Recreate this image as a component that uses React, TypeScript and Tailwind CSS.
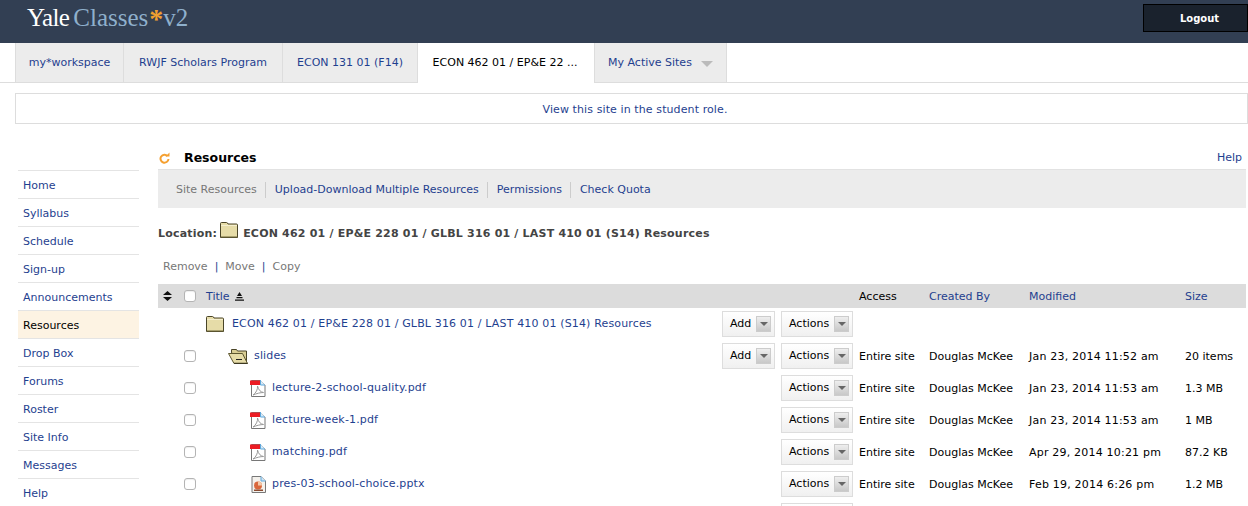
const sideItems = ["Home", "Syllabus", "Schedule", "Sign-up", "Announcements", "Resources", "Drop Box", "Forums", "Roster", "Site Info", "Messages", "Help"];

function Checkbox() {
  return <span className="block h-3 w-3 rounded-[3px] border border-[#b4b4b4] bg-white shadow-[inset_0_1px_1px_#eee]" />;
}

function DropButton({ label, width }: { label: string; width: string }) {
  return (
    <div className={`flex h-[26px] ${width} items-center justify-between border border-[#ddd] bg-gradient-to-b from-white to-[#f0f0f0] pl-[7px] pr-[3px] text-black`}>
      <span>{label}</span>
      <span className="flex h-4 w-[15px] items-center justify-center border border-[#ccc] bg-gradient-to-b from-[#eee] to-[#c8c8c8]">
        <span className="h-0 w-0 border-x-[4px] border-t-[4px] border-x-transparent border-t-[#666]" />
      </span>
    </div>
  );
}

function ClosedFolder() {
  return (
    <svg width="18" height="16" viewBox="0 0 18 16" className="shrink-0">
      <path d="M.5 3V1.500q0-1 1-1h5q1 0 1.500 1.500H16.500q1 0 1 1V15.500H.5z" fill="#e6dca8" stroke="#4a4528" />
      <path d="M1 14.500H17.500V15.500H1z" fill="#6b6436" />
      <path d="M1 3.500H17" stroke="#f5efcf" />
    </svg>
  );
}

function OpenFolder() {
  return (
    <svg width="20" height="16" viewBox="0 0 20 16" className="shrink-0">
      <path d="M3.500 4V1.500h5l1 1.500h9v12H6z" fill="#d8cd94" stroke="#4a4528" />
      <path d="M.5 5.500h14l5 10H6z" fill="#e6dca8" stroke="#5d5730" />
      <path d="M8 11.500h6" stroke="#222" />
      <path d="M6 15.500h13.500" stroke="#3c3820" strokeWidth="1.500" />
    </svg>
  );
}

function PdfIcon() {
  return (
    <svg width="16" height="18" viewBox="0 0 16 18" className="shrink-0">
      <path d="M1.500 1.500H10.500L15 6V17.500H1.500z" fill="#fff" stroke="#777" />
      <path d="M10.500 1v5H15" fill="#d6ebfa" stroke="#5fa8dc" />
      <rect x="0" y="1.500" width="10" height="4.500" fill="#ec1c24" />
      <path d="M3 16c3-2 5-6 4.500-9 1 4 3 6 6 6.500-3 0-7 1-10.500 2.500z" fill="none" stroke="#999" />
    </svg>
  );
}

function PptIcon() {
  return (
    <svg width="15" height="17" viewBox="0 0 15 17" className="shrink-0">
      <path d="M1 .5H10L14.500 5V16.500H1z" fill="#f4f1ec" stroke="#777" />
      <path d="M10 .5V5h4.500" fill="#cfe6f7" stroke="#5fa8dc" />
      <circle cx="7" cy="9.500" r="4" fill="#d9673c" />
      <path d="M7 9.500V5.500a4 4 0 0 1 4 4z" fill="#f3c9a8" />
      <rect x="3" y="13.500" width="9" height="1.500" fill="#8a4a30" />
    </svg>
  );
}

function Row({ check = true, indent, icon, name, add = false, action = "Actions", access = "", by = "", modified = "", size = "" }: {
  check?: boolean; indent: string; icon?: React.ReactNode; name?: string; add?: boolean; action?: string; access?: string; by?: string; modified?: string; size?: string;
}) {
  return (
    <div className="flex h-8 shrink-0 items-center">
      <div className="w-[26px] shrink-0" />
      <div className="w-3 shrink-0">{check && <Checkbox />}</div>
      <div className={`flex w-[526px] shrink-0 items-center ${indent}`}>
        {icon}
        <span className="whitespace-nowrap tracking-[0.15px] text-[#1f3f8f]">{name}</span>
      </div>
      <div className="w-[59px] shrink-0">{add && <DropButton label="Add" width="w-[53px]" />}</div>
      <div className="w-[78px] shrink-0"><DropButton label={action} width="w-[72px]" /></div>
      <div className="w-[70px] shrink-0 pt-[2px] text-black">{access}</div>
      <div className="w-[100px] shrink-0 pt-[2px] text-black">{by}</div>
      <div className="w-[156px] shrink-0 pt-[2px] tracking-[0.2px] text-black">{modified}</div>
      <div className="whitespace-nowrap pt-[2px] text-black">{size}</div>
    </div>
  );
}

export default function App() {
  return (
    <div className="h-[506px] w-[1248px] overflow-hidden bg-white font-['DejaVu_Sans',sans-serif] text-[11px] text-[#1f3f8f]">
      {/* Top banner */}
      <header className="flex h-[43px] justify-between bg-[#323f53]">
        <div className="flex items-baseline pl-[27px] pt-[3px] font-['Liberation_Serif',serif] text-[25px] leading-[30px]">
          <span className="tracking-[-0.6px] text-white">Yale</span>
          <span className="ml-[4px] text-[#8fb0cc]">Classes</span>
          <span className="ml-[1px] translate-y-[2px] text-[28px] font-bold leading-[20px] text-[#f0a030]">*</span>
          <span className="text-[#8fb0cc]">v2</span>
        </div>
        <button className="mt-1 h-7 w-[105px] border border-black bg-[#1a222d] pl-2 pt-[1px] text-[10px] font-bold text-white">Logout</button>
      </header>

      {/* Site tabs */}
      <nav className="flex h-10 border-b border-[#ddd] pl-[15px]">
        <div className="flex h-[39px] w-[109px] items-center justify-center border-x border-[#ddd] bg-[#ececec] pt-[2px]">my*workspace</div>
        <div className="flex h-[39px] w-[159px] items-center justify-center border-r border-[#ddd] bg-[#ececec] pt-[2px]">RWJF Scholars Program</div>
        <div className="flex h-[39px] w-[135px] items-center justify-center border-r border-[#ddd] bg-[#ececec] pt-[2px]">ECON 131 01 (F14)</div>
        <div className="flex h-10 w-[176px] items-center justify-center bg-white pr-[2px] text-black">ECON 462 01 / EP&amp;E 22 ...</div>
        <div className="flex h-[39px] w-[133px] items-center gap-[9px] border-x border-[#ddd] bg-[#ececec] pl-[13px] pt-[2px]">
          My Active Sites
          <span className="h-0 w-0 border-x-[6px] border-t-[6px] border-x-transparent border-t-[#bbb]" />
        </div>
      </nav>

      {/* Role notice */}
      <div className="ml-[15px] mt-[10px] flex h-[31px] items-center justify-center border border-[#ddd] pl-[7px] pt-[3px] tracking-[0.1px]">View this site in the student role.</div>

      <div className="mt-[24px] flex">
        {/* Tool menu */}
        <aside className="ml-[18px] mt-[22px] w-[121px] shrink-0">
          {sideItems.map((item) => (
            <div key={item} className={`flex h-7 items-center border-t border-[#e4e4e4] pl-[5px] pt-[4px] ${item === "Resources" ? "bg-[#fdf3e3] text-black" : ""}`}>
              {item}
            </div>
          ))}
        </aside>

        <main className="ml-[19px] w-[1088px] shrink-0">
          <div className="flex h-[21px] items-center justify-between">
            <div className="flex items-center">
              <svg width="11" height="12" viewBox="0 0 11 12" className="ml-[1px] -mt-[2px]">
                <path d="M8.500 4A4 4 0 1 0 9.500 7" fill="none" stroke="#f5a030" strokeWidth="2" />
                <path d="M6.500 4.500H10.500V.5z" fill="#f5a030" />
              </svg>
              <h1 className="ml-[14px] -mt-[1px] text-[12.5px] font-bold text-black">Resources</h1>
            </div>
            <span className="mr-1">Help</span>
          </div>

          {/* Tool sub-navigation */}
          <div className="flex h-[39px] items-center border-t border-[#e2e2e2] bg-[#ececec] pl-[18px] pt-[2px]">
            <span className="border-r border-[#ccc] pr-[8px] text-[#777]">Site Resources</span>
            <span className="border-r border-[#ccc] pl-[9px] pr-[8px]">Upload-Download Multiple Resources</span>
            <span className="border-r border-[#ccc] pl-[9px] pr-[8px]">Permissions</span>
            <span className="pl-[9px]">Check Quota</span>
          </div>

          <div className="mt-[13px] flex h-[24px] items-center whitespace-nowrap pt-[2px] font-bold tracking-[0.2px] text-[#444]">
            <span className="mr-[3px]">Location:</span>
            <span className="-mt-2"><ClosedFolder /></span>
            <span className="ml-[5px]">ECON 462 01 / EP&amp;E 228 01 / GLBL 316 01 / LAST 410 01 (S14) Resources</span>
          </div>

          <div className="mt-[10px] flex h-[24px] items-center pl-[5px] text-[#777]">
            <span>Remove</span>
            <span className="mx-[7px] text-[#1f3f8f]">|</span>
            <span>Move</span>
            <span className="mx-[7px] text-[#1f3f8f]">|</span>
            <span>Copy</span>
          </div>

          {/* Resource list */}
          <div className="mt-[5px] flex h-6 items-center bg-[#dcdcdc]">
            <svg width="9" height="10" viewBox="0 0 9 10" className="ml-[5px] mr-[12px] shrink-0">
              <path d="M4.500 0L9 4H0zM0 6H9L4.500 10z" fill="#111" />
            </svg>
            <div className="w-3 shrink-0"><Checkbox /></div>
            <div className="flex w-[663px] shrink-0 items-center pl-[10px] pt-[2px]">
              Title
              <svg width="9" height="9" viewBox="0 0 9 9" className="ml-[5px] -mt-[2px]">
                <path d="M4.500 0L7 4H2zM1.500 5H7.500V6.200H1.500zM0 7.500H9V8.800H0z" fill="#111" />
              </svg>
            </div>
            <div className="w-[70px] shrink-0 pt-[2px] text-black">Access</div>
            <div className="w-[100px] shrink-0 pt-[2px]">Created By</div>
            <div className="w-[156px] shrink-0 pt-[2px]">Modified</div>
            <div className="pt-[2px]">Size</div>
          </div>

          <div className="flex flex-col">
            <Row check={false} indent="pl-[10px] gap-2" icon={<ClosedFolder />} name="ECON 462 01 / EP&E 228 01 / GLBL 316 01 / LAST 410 01 (S14) Resources" add />
            <Row indent="pl-[32px] gap-[6px]" icon={<OpenFolder />} name="slides" add access="Entire site" by="Douglas McKee" modified="Jan 23, 2014 11:52 am" size="20 items" />
            <Row indent="pl-[54px] gap-[6px]" icon={<PdfIcon />} name="lecture-2-school-quality.pdf" access="Entire site" by="Douglas McKee" modified="Jan 23, 2014 11:53 am" size="1.3 MB" />
            <Row indent="pl-[54px] gap-[6px]" icon={<PdfIcon />} name="lecture-week-1.pdf" access="Entire site" by="Douglas McKee" modified="Jan 23, 2014 11:53 am" size="1 MB" />
            <Row indent="pl-[54px] gap-[6px]" icon={<PdfIcon />} name="matching.pdf" access="Entire site" by="Douglas McKee" modified="Apr 29, 2014 10:21 pm" size="87.2 KB" />
            <Row indent="pl-[55px] gap-[6px]" icon={<PptIcon />} name="pres-03-school-choice.pptx" access="Entire site" by="Douglas McKee" modified="Feb 19, 2014 6:26 pm" size="1.2 MB" />
            <Row check={false} indent="" action="" />
          </div>
        </main>
      </div>
    </div>
  );
}
